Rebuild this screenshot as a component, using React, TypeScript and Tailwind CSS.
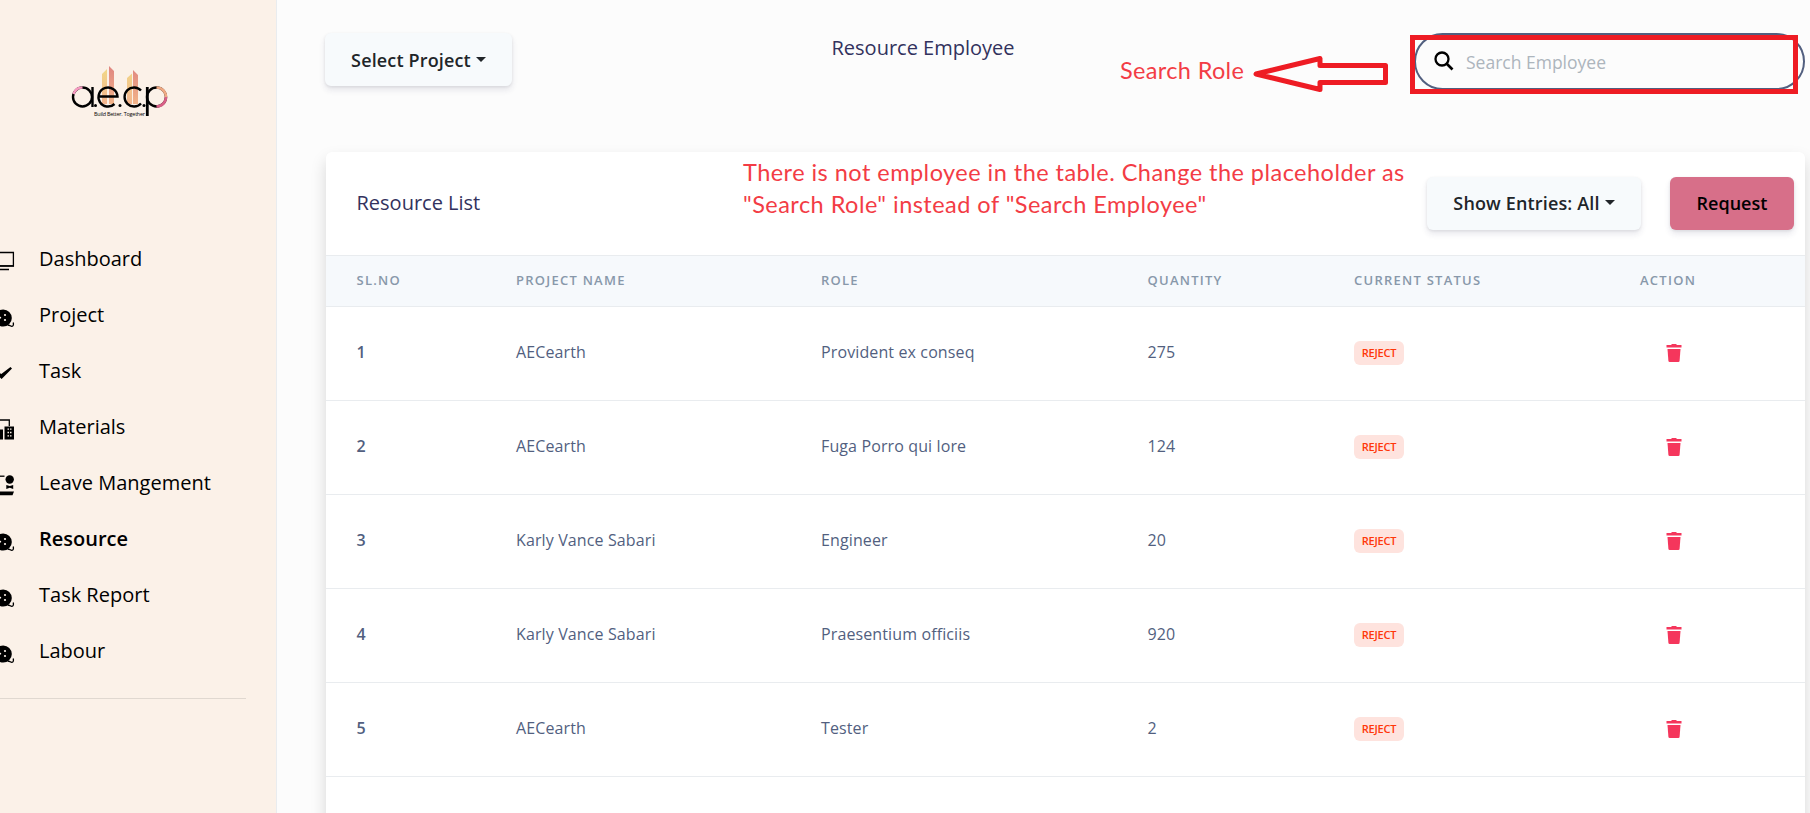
import React from "react";

const rows = [
  ["1", "AECearth", "Provident ex conseq", "275"],
  ["2", "AECearth", "Fuga Porro qui lore", "124"],
  ["3", "Karly Vance Sabari", "Engineer", "20"],
  ["4", "Karly Vance Sabari", "Praesentium officiis", "920"],
  ["5", "AECearth", "Tester", "2"],
];

const grid =
  "grid grid-cols-[159.5px_305px_326.5px_206.5px_286px_1fr] items-center pl-[30.5px] border-b border-[#e9ecef]";

function Monitor() {
  return (
    <svg width="15" height="22" viewBox="0 0 15 22" className="block">
      <path d="M-6 2.500H13.400V16H-6Z" fill="none" stroke="#000" strokeWidth="1.300" />
      <path d="M-6 15.900H14M-2 19.500H9" fill="none" stroke="#000" strokeWidth="1.300" />
    </svg>
  );
}

function Film() {
  return (
    <svg width="15" height="22" viewBox="0 0 15 22" className="block">
      <circle cx="3.200" cy="12" r="8.600" fill="#000" />
      <path d="M7.500 19C10 19 10.500 20.500 12 20.300C13.700 20 13.600 18 13.200 16.500" fill="none" stroke="#000" strokeWidth="1.300" />
      <g fill="#fbf1e8">
        <circle cx="5" cy="9" r="1.100" />
        <circle cx="5" cy="14" r="1.100" />
        <circle cx="0.300" cy="11.700" r="0.900" />
      </g>
    </svg>
  );
}

function Check() {
  return (
    <svg width="15" height="22" viewBox="0 0 15 22" className="block">
      <path d="M-3 9.500L1.300 12L10.500 5L12 6.600L1.600 17L-3 13Z" fill="#000" />
    </svg>
  );
}

function Building() {
  return (
    <svg width="15" height="22" viewBox="0 0 15 22" className="block">
      <path d="M-3 2H9.300V8" fill="none" stroke="#000" strokeWidth="1.300" />
      <path d="M4.500 8.500H14V21.500H4.500Z M-3 11.500H3V21.500H-3Z" fill="#000" />
      <path d="M7.500 11.200H11.500M7.500 14.500H11.500M7.500 17.800H11.500" stroke="#fbf1e8" strokeWidth="1.300" strokeDasharray="1.500 1" />
    </svg>
  );
}

function Leave() {
  return (
    <svg width="15" height="22" viewBox="0 0 15 22" className="block">
      <path d="M-3 2.200H4.500" stroke="#000" strokeWidth="1.300" />
      <circle cx="9.700" cy="5.500" r="4.200" fill="#000" />
      <path d="M6.300 11L9.800 12L13.200 11V15L9.800 13.800L6.300 15Z" fill="#000" />
      <path d="M-3 17.500H14L12.500 21.200H-3Z" fill="#000" />
    </svg>
  );
}

const nav: [string, () => React.JSX.Element][] = [
  ["Dashboard", Monitor],
  ["Project", Film],
  ["Task", Check],
  ["Materials", Building],
  ["Leave Mangement", Leave],
  ["Resource", Film],
  ["Task Report", Film],
  ["Labour", Film],
];

function Logo() {
  return (
    <svg width="100" height="54" viewBox="0 0 100 54" className="block">
      <defs>
        <linearGradient id="tower" x1="0" y1="0" x2="0" y2="1">
          <stop offset="0" stopColor="#f1d888" />
          <stop offset="1" stopColor="#f4b48e" />
        </linearGradient>
        <linearGradient id="tower2" x1="0" y1="0" x2="0" y2="1">
          <stop offset="0" stopColor="#df8580" />
          <stop offset="1" stopColor="#f2b489" />
        </linearGradient>
      </defs>
      <path d="M32 9L37 4V39H32Z M57 13L62 8.500V39H57Z" fill="url(#tower)" />
      <path d="M39 1L44 6V39H39Z M63 5L68 10V39H63Z" fill="url(#tower2)" />
      <g fill="none" stroke="#000" strokeWidth="2.400">
        <circle cx="12.500" cy="32" r="9.500" />
        <path d="M22.500 22V42" />
        <path d="M28.500 31.500H47.500A9.500 9.500 0 1 0 44.500 39" />
        <path d="M71 25.500A9.500 9.500 0 1 0 71 38.500" />
        <circle cx="86.500" cy="32" r="9.500" />
        <path d="M77.300 22V51" strokeWidth="2.800" />
      </g>
      <path d="M3.500 29A9.500 9.500 0 0 1 12.500 22.500" fill="none" stroke="#f59ac0" strokeWidth="2.600" />
      <path d="M86.500 22.500A9.500 9.500 0 0 1 96 32" fill="none" stroke="#efa983" strokeWidth="2.600" />
      <path d="M96 32A9.500 9.500 0 0 1 86.500 41.500" fill="none" stroke="#d85f86" strokeWidth="2.600" />
      <g fill="#000">
        <circle cx="25.500" cy="40.500" r="1.500" />
        <circle cx="50" cy="40.500" r="1.500" />
        <circle cx="74" cy="40.500" r="1.500" />
      </g>
      <text x="24" y="50.500" fontSize="5.400" textLength="51" fontFamily="Open Sans, sans-serif" fill="#000">
        Build Better. Together
      </text>
    </svg>
  );
}

function Caret() {
  return <span className="mb-0.5 ml-[5px] inline-block border-x-[5px] border-t-[5px] border-x-transparent border-t-[#212529]" />;
}

function Trash() {
  return (
    <svg width="16" height="18" viewBox="0 0 16 18" className="mt-0.5 ml-[26px] block" fill="#f5365c">
      <path d="M0.500 1H5L6 0H10L11 1H15.500V3H0.500Z" />
      <path d="M1.500 5H14.500L13.600 16.800Q13.500 18 12.300 18H3.700Q2.500 18 2.400 16.800Z" />
      <path d="M0.500 3H15.500V4H0.500Z" opacity=".5" />
    </svg>
  );
}

export default function App() {
  return (
    <div className="relative flex h-[813px] w-[1810px] overflow-hidden bg-[#fcfcfc] font-['Open_Sans',sans-serif]">
      <aside className="flex w-[277px] shrink-0 flex-col border-r border-[#e9ecef] bg-[#fbf1e8]">
        <div className="pt-[65px] pl-[70px]">
          <Logo />
        </div>
        <nav className="mt-[112px] flex flex-col text-[20px] text-black">
          {nav.map(([label, Icon]) => (
            <div key={label} className="flex h-14 items-center">
              <div className="w-[39px] pt-1">
                <Icon />
              </div>
              <span className={label === "Resource" ? "pb-px font-semibold" : "pb-px"}>{label}</span>
            </div>
          ))}
        </nav>
        <hr className="mt-[19px] mr-[30px] border-[#e0d8d0]" />
      </aside>

      <main className="flex min-w-0 flex-1 flex-col">
        <header className="flex h-[152px] shrink-0 items-start pt-8 pl-12">
          <button className="mt-px flex h-[53px] w-[187px] items-center justify-center rounded-md bg-[#f7fafc] pt-0.5 text-[18px] font-semibold tracking-[0.15px] text-[#212529] shadow-[0_4px_6px_rgba(50,50,93,.11),0_1px_3px_rgba(0,0,0,.08)]">
            Select Project
            <Caret />
          </button>
          <h1 className="ml-[319.5px] w-[582.5px] text-[20px] leading-8 text-[#32325d]">Resource Employee</h1>
          <div className="mt-px flex h-[57px] w-[391px] items-center rounded-[32px] border-2 border-[#525f7f] pl-[18px] text-[17.5px] text-[#adb5bd]">
            <svg width="20" height="20" viewBox="0 0 20 20" className="mr-3 mb-0.5 block" fill="none" stroke="#000">
              <circle cx="8" cy="8" r="6.500" strokeWidth="2.300" />
              <path d="M12.500 12.500L18.500 18.500" strokeWidth="2.600" />
            </svg>
            <span className="pt-0.5">Search Employee</span>
          </div>
        </header>

        <section className="ml-[49px] h-[700px] w-[1479px] shrink-0 rounded-md bg-white shadow-[0_8px_16px_rgba(0,0,0,.15)]">
          <div className="flex h-[103px] items-center pl-[30.5px]">
            <h2 className="mb-0.5 w-[1070.5px] text-[20px] text-[#32325d]">Resource List</h2>
            <button className="flex h-[53px] w-[214px] items-center justify-center rounded-md bg-[#f7fafc] text-[18px] font-semibold tracking-[0.15px] text-[#212529] shadow-[0_4px_6px_rgba(50,50,93,.11),0_1px_3px_rgba(0,0,0,.08)]">
              Show Entries: All
              <Caret />
            </button>
            <button className="ml-[29px] h-[53px] w-[124px] rounded-md bg-[#d76f89] text-[18px] font-semibold text-black shadow-[0_4px_6px_rgba(50,50,93,.11),0_1px_3px_rgba(0,0,0,.08)]">
              Request
            </button>
          </div>
          <div className={`${grid} h-[52px] border-t bg-[#f6f9fc] text-[13px] font-semibold tracking-[1.25px] text-[#8898aa]`}>
            <span>SL.NO</span>
            <span>PROJECT NAME</span>
            <span>ROLE</span>
            <span>QUANTITY</span>
            <span>CURRENT STATUS</span>
            <span>ACTION</span>
          </div>
          {rows.map(([n, project, role, qty]) => (
            <div key={n} className={`${grid} h-[94.1px] pb-[3px] text-[16px] tracking-[0.12px] text-[#525f7f]`}>
              <span className="font-semibold">{n}</span>
              <span>{project}</span>
              <span>{role}</span>
              <span>{qty}</span>
              <span className="mt-0.5 flex h-6 w-[50px] items-center justify-center rounded-md bg-[#fee3de] text-[11px] font-semibold tracking-[-0.200px] text-[#ff3709]">
                REJECT
              </span>
              <Trash />
            </div>
          ))}
        </section>
      </main>

      <div className="absolute top-[35px] left-[1410px] h-[59px] w-[388px] border-5 border-[#ee1c24]" />
      <svg className="absolute top-[50px] left-[1250px]" width="142" height="48" viewBox="0 0 142 48">
        <path d="M6 24L70 8.500V15.500H135.500V32.500H70V39.500Z" fill="none" stroke="#ee1c24" strokeWidth="5" strokeLinejoin="round" />
      </svg>
      <div className="absolute top-[54px] left-[1120px] font-['Lato',sans-serif] text-[23.5px] leading-8 tracking-[0.35px] whitespace-nowrap text-[#f33c45]">
        Search Role
      </div>
      <div className="absolute top-[156px] left-[743px] font-['Lato',sans-serif] text-[23.5px] leading-8 tracking-[0.47px] whitespace-nowrap text-[#f33c45]">
        There is not employee in the table. Change the placeholder as
        <br />
        "Search Role" instead of "Search Employee"
      </div>
    </div>
  );
}
